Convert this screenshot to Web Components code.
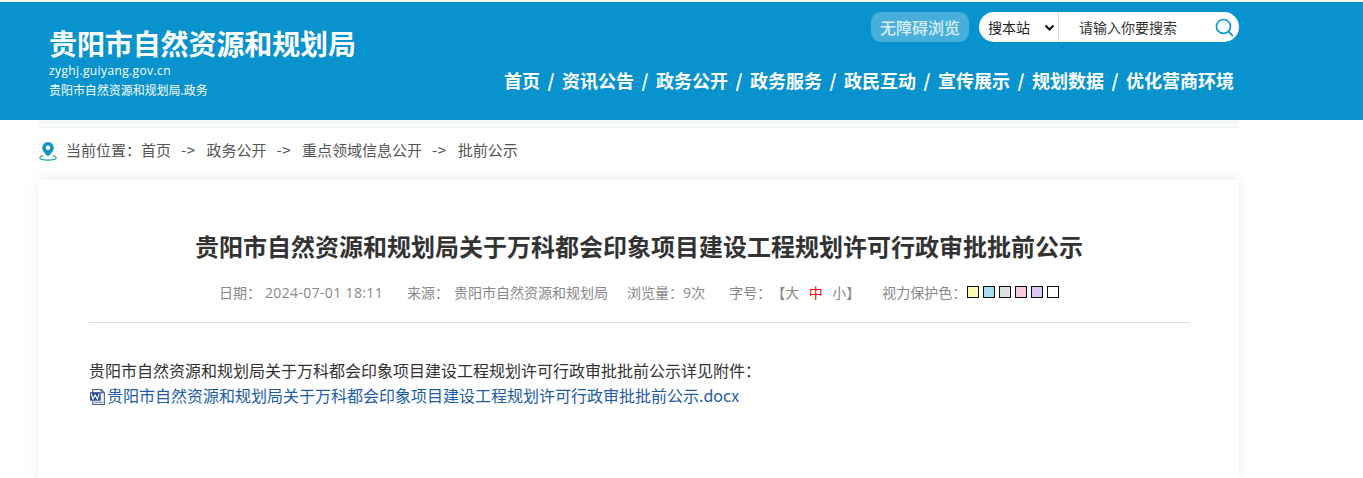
<!DOCTYPE html>
<html lang="zh-CN"><head><meta charset="utf-8"><title>批前公示</title>
<style>
html,body{margin:0;padding:0;background:#fff;overflow:hidden;height:478px}
body{font-family:"Noto Sans CJK SC","Liberation Sans",sans-serif;color:#333}
</style></head><body>
<site-header></site-header>
<bread-crumb></bread-crumb>
<article-card></article-card>
<script>
const F='"Noto Sans CJK SC","Liberation Sans",sans-serif';
class SiteHeader extends HTMLElement{constructor(){super();this.attachShadow({mode:'open'}).innerHTML=`
<style>
:host{display:block;margin-top:2px;height:118px;background:#0893cf;color:#fff;font-family:${F}}
.in{width:1200px;margin-left:39px;height:118px;display:flex;justify-content:space-between;box-sizing:border-box}
.brand{padding:21px 0 0 10px;display:flex;flex-direction:column}
.name{font-size:28px;font-weight:700;line-height:40px;letter-spacing:-.1px}
.dom{font-family:"Open Sans","Liberation Sans",sans-serif;font-size:12px;line-height:16px;margin-top:0;letter-spacing:.38px}
.sub{font-size:12px;line-height:18px;margin-top:2px;letter-spacing:-.05px}
.right{display:flex;flex-direction:column;align-items:flex-end}
.tools{display:flex;gap:10px;margin-top:10px}
.acc{width:98px;height:30px;border-radius:10px;background:#4aaeda;color:#d8eef8;font-size:16px;font-weight:500;line-height:30px;text-align:center}
.search{width:260px;height:30px;border-radius:15px;background:#fff;display:flex;align-items:center;color:#222;font-size:14px}
.sel{width:80px;height:30px;box-sizing:border-box;padding-left:9px;border-right:1px solid #ddd;display:flex;align-items:center;gap:14px}
.sel svg{margin-top:1px}
.ph{flex:1;padding-left:20px;font-size:14px;color:#333}
.mag{margin-right:5px;display:block}
nav{display:flex;margin-top:23px;margin-right:5px;font-size:18px;font-weight:700;line-height:30px;white-space:pre}
nav i{font-style:normal;width:22px;text-align:center}
</style>
<div class="in"><div class="brand"><div class="name">贵阳市自然资源和规划局</div><div class="dom">zyghj.guiyang.gov.cn</div><div class="sub">贵阳市自然资源和规划局.政务</div></div>
<div class="right"><div class="tools"><div class="acc">无障碍浏览</div><div class="search"><div class="sel"><span>搜本站</span><svg width="11" height="8" viewBox="0 0 11 8"><path d="M1.500 1.500 5.500 5.500 9.500 1.500" fill="none" stroke="#111" stroke-width="2"/></svg></div><div class="ph">请输入你要搜索</div><svg class="mag" width="19" height="19" viewBox="0 0 18 18"><circle cx="8" cy="8" r="6.600" fill="none" stroke="#0f9ad0" stroke-width="1.600"/><path d="M12.800 12.800 16.400 16.400" stroke="#0f9ad0" stroke-width="1.700" stroke-linecap="round"/></svg></div></div>
<nav><span>首页</span><i>/</i><span>资讯公告</span><i>/</i><span>政务公开</span><i>/</i><span>政务服务</span><i>/</i><span>政民互动</span><i>/</i><span>宣传展示</span><i>/</i><span>规划数据</span><i>/</i><span>优化营商环境</span></nav></div></div>`}}
class BreadCrumb extends HTMLElement{constructor(){super();this.attachShadow({mode:'open'}).innerHTML=`
<style>
:host{display:block;width:1200px;margin-left:39px;font-family:${F};font-size:15px;color:#555}
.bar{box-sizing:border-box;height:8px;background:linear-gradient(#f5f9f8 0 5px,#fff 5px 6px,#f3f5f5 6px)}
.row{display:flex;align-items:center;height:42px;white-space:pre}
svg{margin-right:9px;display:block;margin-top:3px}
i{font-style:normal;margin:0 11px 0 10px;letter-spacing:.5px}
</style>
<div class="bar"></div>
<div class="row"><svg width="18" height="20" viewBox="0 0 18 20"><path d="M9 1a5.800 5.800 0 0 0-5.800 5.800C3.200 10.500 9 15.500 9 15.500S14.800 10.500 14.800 6.800A5.800 5.800 0 0 0 9 1Z" fill="#0f93c8"/><circle cx="9" cy="6.800" r="2.300" fill="#fff"/><path d="M4 14.500C1.800 15.200.8 16 .8 16.800c0 1.300 3.600 2.300 8.200 2.300s8.200-1 8.200-2.300c0-.8-1-1.600-3.200-2.300" fill="none" stroke="#27a0a8" stroke-width="1.200"/></svg><span>当前位置：首页</span><i>-&gt;</i><span>政务公开</span><i>-&gt;</i><span>重点领域信息公开</span><i>-&gt;</i><span>批前公示</span></div>`}}
class ArticleCard extends HTMLElement{constructor(){super();this.attachShadow({mode:'open'}).innerHTML=`
<style>
:host{display:block;box-sizing:border-box;width:1200px;height:298px;margin:10px 0 0 39px;padding:45px 49px 0 50px;background:#fff;box-shadow:0 0 12px rgba(190,195,225,.35);font-family:${F};color:#333}
h1{margin:0 0 0 -1px;font-size:24px;line-height:42px;font-weight:700;text-align:center;color:#333}
.meta{display:flex;margin-top:14px;height:41px;padding:0 0 0 130px;border-bottom:1px solid #ddd;font-size:14px;line-height:22px;color:#888;white-space:pre}
.num{font-family:"Open Sans","Liberation Sans",sans-serif;letter-spacing:.35px;margin-top:1px}
.sw{display:inline-flex;gap:4px;vertical-align:top;margin:5px 0 0 1px}
.sw b{display:block;width:10px;height:10px;border:1px solid #111}
.red{color:#d8100c}
.body{margin-top:35px;font-size:16px;line-height:25px;color:#333}
a{color:#1d5da8;text-decoration:none;display:flex;align-items:center}
svg{display:block;flex:none;margin:3px 1px 0 0}
</style>
<h1>贵阳市自然资源和规划局关于万科都会印象项目建设工程规划许可行政审批批前公示</h1>
<div class="meta"><span>日期：</span><span class="num" style="margin-left:4px;margin-right:24px">2024-07-01 18:11</span><span style="margin-right:5px">来源：</span><span style="margin-right:19px">贵阳市自然资源和规划局</span><span>浏览量：</span><span class="num">9</span><span style="margin-right:24px">次</span><span>字号：</span><span style="margin-right:22px">【大<span class="red">   中   </span>小】</span><span>视力保护色：<span class="sw"><b style="background:#faf9b4"></b><b style="background:#a8dcf2"></b><b style="background:#dfe0e2"></b><b style="background:#f8ccd8"></b><b style="background:#dcc8f6"></b><b style="background:#fff"></b></span></span></div>
<div class="body"><div>贵阳市自然资源和规划局关于万科都会印象项目建设工程规划许可行政审批批前公示详见附件：</div>
<a href="#"><svg width="17" height="18" viewBox="0 0 16 17"><path d="M3.500 1.500H11.500L14.500 4.500V15.500H3.500Z" fill="#eef2f8" stroke="#4a5c7c"/><path d="M11.500 1.500V4.500H14.500" fill="none" stroke="#4a5c7c"/><rect x="1" y="4" width="10" height="8" fill="#24468e"/><path d="M2.200 5.300 3.700 10.500 5.800 6.500 7.900 10.500 9.600 5.300" fill="none" stroke="#fff" stroke-width="1.100"/><path d="M5 13.500h8" stroke="#6d83a8"/></svg>贵阳市自然资源和规划局关于万科都会印象项目建设工程规划许可行政审批批前公示.docx</a></div>`}}
customElements.define('site-header',SiteHeader);
customElements.define('bread-crumb',BreadCrumb);
customElements.define('article-card',ArticleCard);
</script></body></html>
